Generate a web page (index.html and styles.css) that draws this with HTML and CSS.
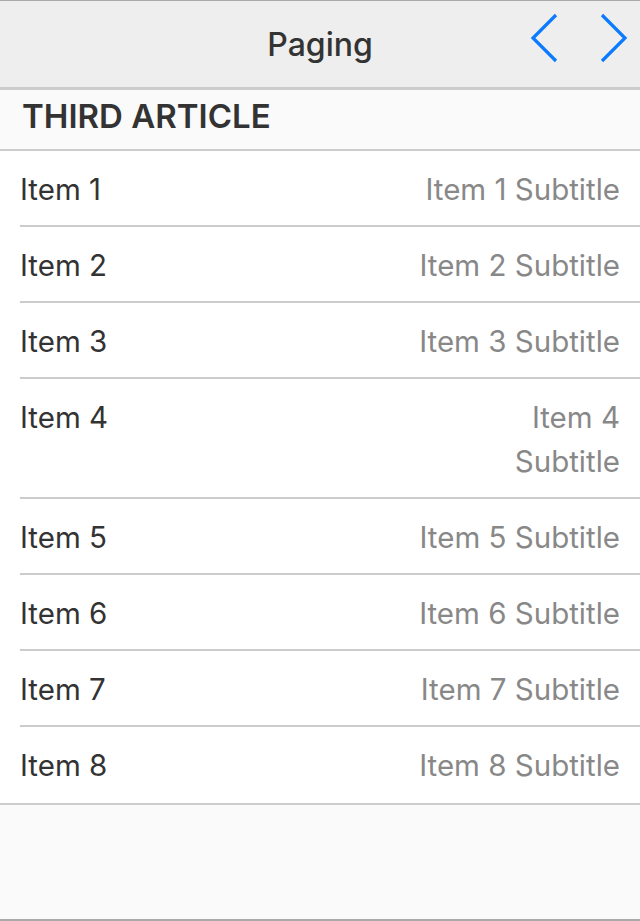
FILE: index.html
```html
<!DOCTYPE html>
<html>
<head>
<meta charset="utf-8">
<link rel="stylesheet" href="styles.css">
</head>
<body>
<div class="screen">
  <header class="navbar">
    <div class="nav-title">Paging</div>
    <div class="nav-buttons">
      <svg class="chev" width="32" height="52" viewBox="0 0 32 52"><polyline points="28,3 5,26 28,49" fill="none" stroke="#0a7aff" stroke-width="3.2"/></svg>
      <svg class="chev" width="32" height="52" viewBox="0 0 32 52"><polyline points="4,3 27,26 4,49" fill="none" stroke="#0a7aff" stroke-width="3.2"/></svg>
    </div>
  </header>
  <div class="section-header">THIRD ARTICLE</div>
  <ul class="list">
    <li class="row"><span class="title">Item 1</span><span class="subtitle">Item 1 Subtitle</span></li>
    <li class="row"><span class="title">Item 2</span><span class="subtitle">Item 2 Subtitle</span></li>
    <li class="row"><span class="title">Item 3</span><span class="subtitle">Item 3 Subtitle</span></li>
    <li class="row"><span class="title">Item 4</span><span class="subtitle">Item 4<br>Subtitle</span></li>
    <li class="row"><span class="title">Item 5</span><span class="subtitle">Item 5 Subtitle</span></li>
    <li class="row"><span class="title">Item 6</span><span class="subtitle">Item 6 Subtitle</span></li>
    <li class="row"><span class="title">Item 7</span><span class="subtitle">Item 7 Subtitle</span></li>
    <li class="row last"><span class="title">Item 8</span><span class="subtitle">Item 8 Subtitle</span></li>
  </ul>
  <div class="footer-space"></div>
</div>
</body>
</html>
```
FILE: styles.css
```css
html, body {
  margin: 0;
  padding: 0;
}
body {
  font-family: Inter, "Noto Sans", sans-serif;
  background: #fafafa;
}
.screen {
  width: 640px;
  height: 921px;
  display: flex;
  flex-direction: column;
  box-sizing: border-box;
  border-top: 1px solid #aaaaaa;
  border-bottom: 2px solid #aaaaaa;
  background: #fafafa;
}
.navbar {
  height: 86px;
  background: #eeeeee;
  border-bottom: 3px solid #cccccc;
  display: flex;
  align-items: center;
  justify-content: center;
  position: relative;
  flex: none;
}
.nav-title {
  font-size: 32px;
  font-weight: 500;
  color: #333333;
}
.nav-buttons {
  position: absolute;
  right: 10px;
  top: 11px;
  display: flex;
  gap: 38px;
}
.chev {
  display: block;
}
.section-header {
  height: 61px;
  box-sizing: border-box;
  padding-left: 22px;
  padding-bottom: 8px;
  display: flex;
  align-items: center;
  font-size: 33px;
  font-weight: 600;
  color: #333333;
  border-bottom: 2px solid #cccccc;
  flex: none;
}
.list {
  list-style: none;
  margin: 0;
  padding: 0;
  background: #ffffff;
  border-bottom: 2px solid #cccccc;
}
.row {
  display: flex;
  justify-content: space-between;
  align-items: flex-start;
  margin-left: 20px;
  padding: 16px 20px 14px 0;
  border-bottom: 2px solid #cccccc;
  line-height: 44px;
  font-size: 29.5px;
}
.row.last {
  border-bottom: none;
  padding-bottom: 16px;
}
.title {
  color: #333333;
}
.subtitle {
  color: #888888;
  text-align: right;
}
.footer-space {
  flex: 1;
}
```
